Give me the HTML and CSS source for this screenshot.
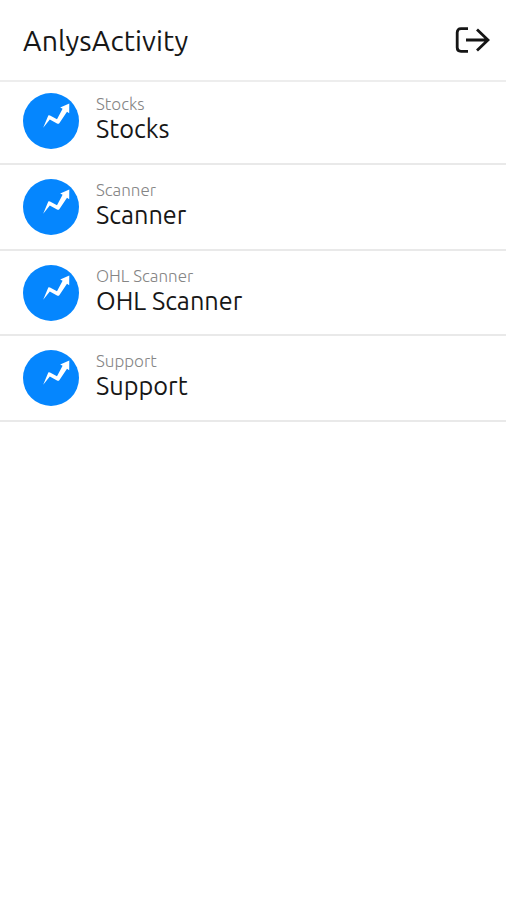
FILE: index.html
```html
<!DOCTYPE html>
<html lang="en">
<head>
<meta charset="utf-8">
<title>AnlysActivity</title>
<link rel="stylesheet" href="styles.css">
</head>
<body>
<svg class="defs" aria-hidden="true">
  <symbol id="trend" viewBox="0 0 56 56">
    <circle cx="28" cy="28" r="28" fill="#0586fe"/>
    <path d="M20.2 34.8L25.3 22.4Q26 22 27 22.6L34 26.2L39.6 15.7L37.2 14.4L46.3 10.4L46.2 20.3L44 18.7L36.3 30.2Q35.3 31.2 34 30.4L26.8 26.4Z" fill="#fff"/>
  </symbol>
</svg>
<header class="bar">
  <h1 class="title">AnlysActivity</h1>
  <button class="exit" aria-label="Log out">
    <svg width="36" height="28" viewBox="0 0 36 28" fill="none" stroke="#151515" stroke-width="2.8">
      <path d="M14 2.7H7Q3.2 2.7 3.2 6.5V21.5Q3.2 25.3 7 25.3H14M12 14H34M23 3.5L34 14L23 24.5"/>
    </svg>
  </button>
</header>
<ul class="list">
  <li class="row"><svg class="icon"><use href="#trend"/></svg><div class="text"><span class="label">Stocks</span><span class="name">Stocks</span></div></li>
  <li class="row"><svg class="icon"><use href="#trend"/></svg><div class="text"><span class="label">Scanner</span><span class="name">Scanner</span></div></li>
  <li class="row"><svg class="icon"><use href="#trend"/></svg><div class="text"><span class="label">OHL Scanner</span><span class="name">OHL Scanner</span></div></li>
  <li class="row"><svg class="icon"><use href="#trend"/></svg><div class="text"><span class="label">Support</span><span class="name">Support</span></div></li>
</ul>
</body>
</html>
```
FILE: styles.css
```css
* { box-sizing: border-box; }
body { margin: 0; min-height: 900px; background: #fff; color: #171717; font-family: Ubuntu, "Noto Sans", sans-serif; }
.defs { display: none; }
.bar { height: 82px; padding: 0 16px 0 23px; display: flex; align-items: center; justify-content: space-between; border-bottom: 2px solid #ededed; }
.title { margin: 0; font-size: 28.5px; line-height: 36px; font-weight: 400; letter-spacing: 0.1px; }
.exit { padding: 0; border: 0; background: none; display: flex; }
.list { margin: 0; padding: 0; list-style: none; }
.row { height: 85.6px; padding: 14px 23px 0; display: flex; gap: 17px; border-bottom: 2px solid #e9e9e9; }
.row:first-child { height: 83.3px; padding-top: 11.3px; }
.icon { width: 56px; height: 56px; flex: none; }
.text { display: flex; flex-direction: column; }
.label { font-size: 17px; line-height: 22px; color: #858585; font-weight: 300; }
.name { font-size: 25.3px; line-height: 28px; }
```
